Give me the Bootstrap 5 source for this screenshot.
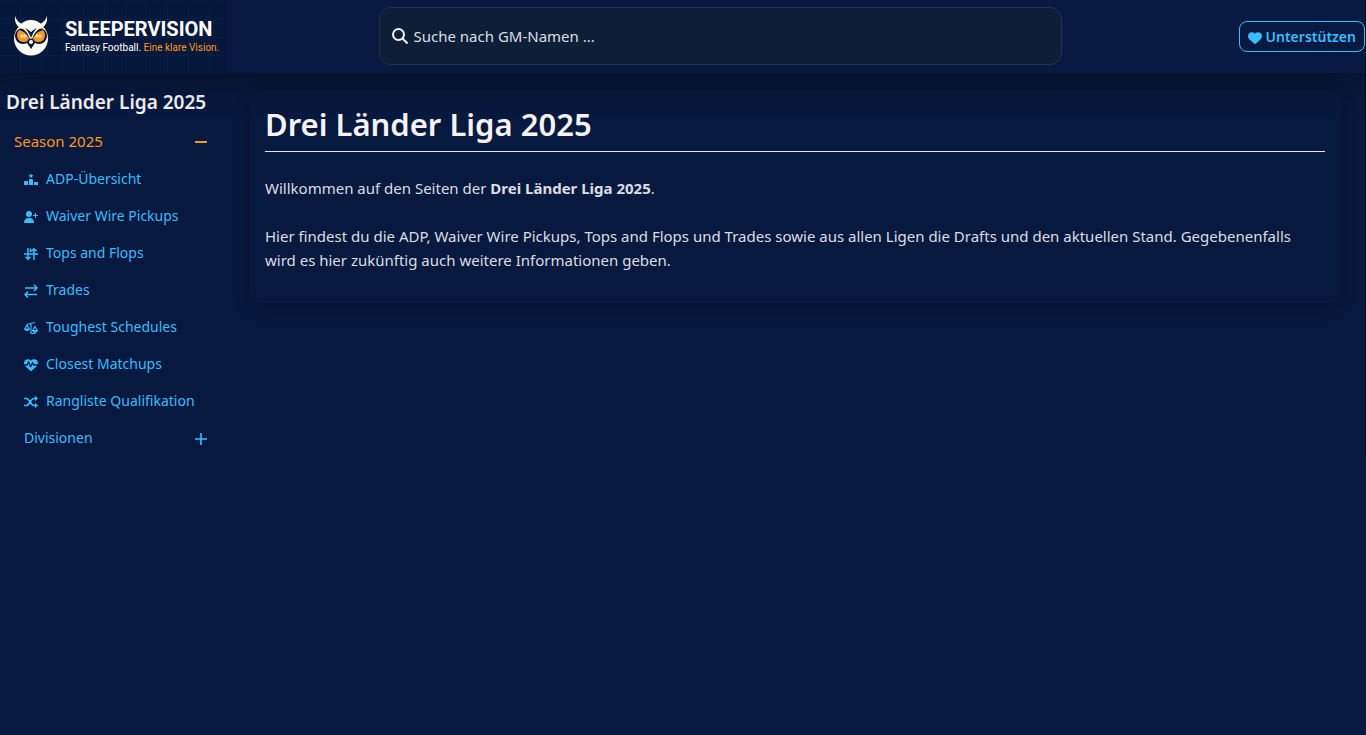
<!DOCTYPE html>
<html lang="de">
<head>
<meta charset="utf-8">
<meta name="viewport" content="width=device-width, initial-scale=1">
<title>Drei Länder Liga 2025 – Sleepervision</title>
<link rel="stylesheet" href="https://cdn.jsdelivr.net/npm/bootstrap@5.3.0/dist/css/bootstrap.min.css">
<style>
  :root { --sky: #38bdff; --amber: #ff9719; --navy: #08193f; --side: 225px; }
  body { background: var(--navy); color: #dcdee2; font-family: "Noto Sans", sans-serif; font-size: 15px; line-height: 24px; border-right: 1px solid #020817; }
  .topbar { background: #081a41; height: 73px; box-shadow: 0 8px 32px rgba(0,0,0,.4); position: relative; z-index: 1; }
  .brand { width: var(--side); color: #fffdf5; padding-left: 11px; gap: 14px; border-right: 1px solid #061433;
    background: repeating-linear-gradient(90deg, transparent 0 20px, #0a1d45 20px 21px), repeating-linear-gradient(0deg, transparent 0 17px, #0a1c44 17px 18px), #07183d; }
  .brand:hover { color: #fff; }
  .brand-name { font: 700 20px/22px Roboto, sans-serif; }
  .brand-claim { font: 400 10px/16px Roboto, sans-serif; }
  .amber { color: var(--amber); }
  .finder { width: 50vw; height: 58px; background: #0d1f36; border: 1px solid #22314c; border-radius: 12px; padding: 0 12px; gap: 6px; }
  .finder input { background: none; border: 0; outline: 0; color: #dcdee2; padding: 0; }
  .finder input::placeholder { color: #dcdee2; opacity: 1; }
  .topbar form, .support { padding-bottom: 1px; }
  .support { width: 150px; }
  .btn-support { --bs-btn-color: var(--sky); --bs-btn-border-color: var(--sky); --bs-btn-hover-color: var(--navy); --bs-btn-hover-bg: var(--sky);
    --bs-btn-padding-x: 8px; --bs-btn-padding-y: 4px; --bs-btn-font-size: 14px; --bs-btn-line-height: 21px; --bs-btn-font-weight: 600; --bs-btn-border-radius: 8px; }
  .side { width: var(--side); padding-top: 17px; }
  .side h2 { font-size: 19px; line-height: 24px; font-weight: 600; color: #f4f4f4; padding-left: 6px; margin-bottom: 9px; }
  .side .row-link { font-size: 14px; line-height: 21px; padding: 8px 17px 8px 24px; color: var(--sky); gap: 8px; background: none; border: 0; }
  .side .row-link.season { font-size: 15px; padding-left: 14px; color: var(--amber); }
  .row-link svg { flex: none; margin-top: 3px; }
  .panel { margin: 17px 24px 0; padding: 15px 16px 7px; border-radius: 12px; box-shadow: 0 4px 16px rgba(0,0,0,.22); }
  .panel h1 { font-size: 31px; line-height: 38px; font-weight: 600; color: #f4f4f4; padding-bottom: 8px; margin-bottom: 24px; border-bottom: 1px solid #e3e6ee; }
  .panel p { margin-bottom: 24px; }
</style>
</head>
<body>
<header class="topbar d-flex align-items-center">
  <a href="#" class="brand d-flex align-items-center h-100 text-decoration-none" aria-label="Sleepervision">
    <svg width="40" height="42" viewBox="0 0 40 42" aria-hidden="true">
      <ellipse cx="20" cy="22.500" rx="17" ry="17" fill="#fffdf2"/>
      <path fill="#07183d" d="M0 0h3l8 9 9 7 9-7 8-9h3v12l-5-1q-7 0-11 4l-4 6-4-6q-4-4-11-4l-5 1z"/>
      <path fill="#fffdf2" d="M10 8q4-4 10-4t10 4q-6 2-10 8-4-6-10-8z"/>
      <path fill="#fffdf2" d="M4 0q2 6 7 8 6 3 9 12 3-9 9-12 5-2 7-8 1 8-5 12-6 2-11 12Q15 14 9 12 3 8 4 0z"/>
      <circle cx="12" cy="20" r="8" fill="#07183d"/><circle cx="28" cy="20" r="8" fill="#07183d"/>
      <path fill="#fffdf2" d="M9 9q7 2 11 13 4-11 11-13 2 3-3 4-5 3-8 13-3-10-8-13-5-1-3-4z"/>
      <path fill="#ff941c" d="M8 14q6 1 10 8-1 4-5 4-6 0-7-6 0-4 2-6zM32 14q-6 1-10 8 1 4 5 4 6 0 7-6 0-4-2-6z"/>
      <path stroke="#fff3d8" d="M9 20h7M11 18v4M14 18v4M24 20h7M26 18v4M29 18v4"/>
      <path fill="#07183d" d="m20 22 4 5-4 6-4-6z"/><circle cx="20" cy="26" r="2" fill="#fffdf2"/>
    </svg>
    <span class="d-flex flex-column">
      <span class="brand-name">SLEEPERVISION</span>
      <span class="brand-claim">Fantasy Football. <span class="amber">Eine klare Vision.</span></span>
    </span>
  </a>
  <form class="flex-fill d-flex justify-content-center" role="search">
    <label class="finder d-flex align-items-center">
      <svg width="16" height="16" viewBox="0 0 16 16" fill="none" stroke="#f0f0f0" stroke-width="2" aria-hidden="true"><circle cx="6.5" cy="6.5" r="5.5"/><path d="m10.5 10.5 5 5"/></svg>
      <input type="search" class="flex-fill" placeholder="Suche nach GM-Namen ..." aria-label="Suche nach GM-Namen">
    </label>
  </form>
  <div class="support d-flex justify-content-end">
    <button type="button" class="btn btn-support text-nowrap"><svg width="14" height="14" viewBox="0 0 512 512" fill="currentColor" aria-hidden="true"><path d="m48 300 180 169c16 14 40 14 56 0l180-169c31-28 48-68 48-109v-6c0-70-50-130-119-141-46-8-92 7-125 40l-12 12-12-12C211 51 165 36 119 44 50 55 0 115 0 185v6c0 41 17 81 48 109z"/></svg> Unterstützen</button>
  </div>
</header>
<div class="d-flex">
  <aside class="side flex-shrink-0">
    <h2>Drei Länder Liga 2025</h2>
    <nav class="d-flex flex-column" aria-label="Liga">
      <button type="button" class="row-link season d-flex justify-content-between align-items-center">Season 2025
        <svg width="14" height="14" viewBox="0 0 14 14" stroke="currentColor" stroke-width="2"><path d="M1 6h12"/></svg></button>
      <a href="#" class="row-link d-flex align-items-center text-decoration-none"><svg width="14" height="14" viewBox="0 0 14 14" fill="currentColor"><path d="m7 .5.8 1.400 1.500.3-1 1.100.1 1.500L7 4.200l-1.400.6.1-1.500-1-1.100 1.500-.3zM5 7q0-1 1-1h2q1 0 1 1v5H5zM0 9q0-1 1-1h3v4H0zM10 9h3q1 0 1 1v2h-4z"/></svg>ADP-Übersicht</a>
      <a href="#" class="row-link d-flex align-items-center text-decoration-none"><svg width="14" height="14" viewBox="0 0 14 14" fill="currentColor"><circle cx="5" cy="4" r="3"/><path d="M0 13q0-5 5-5t5 5zM11 3h1v2h2v1h-2v2h-1V6H9V5h2z"/></svg>Waiver Wire Pickups</a>
      <a href="#" class="row-link d-flex align-items-center text-decoration-none"><svg width="14" height="14" viewBox="0 0 14 14" fill="none" stroke="currentColor" stroke-width="1.500"><path d="M0 7h14M4 1v11M1.500 9.800 4 12.300l2.500-2.500M10 13V2M7.500 4.200 10 1.700l2.500 2.500M6.500 1.500V5"/></svg>Tops and Flops</a>
      <a href="#" class="row-link d-flex align-items-center text-decoration-none"><svg width="14" height="14" viewBox="0 0 14 14" fill="none" stroke="currentColor" stroke-width="1.500"><path d="M1 4h12M10 .8 13 4l-3 3M13 10.500H1M4 7.500l-3 3 3 3"/></svg>Trades</a>
      <a href="#" class="row-link d-flex align-items-center text-decoration-none"><svg width="14" height="14" viewBox="0 0 14 14" fill="none" stroke="currentColor" stroke-width="1.200"><path d="M2.500 3.500 11 1.500M7 2v10.500h4.500M.8 8 3 4l2.200 4M8.800 9.500 11 5.500l2.200 4"/><path fill="currentColor" d="M.7 8h4.600q-.3 1.500-2.300 1.500T.7 8zM8.700 9.700h4.600q-.3 1.500-2.300 1.500t-2.300-1.500z"/></svg>Toughest Schedules</a>
      <a href="#" class="row-link d-flex align-items-center text-decoration-none"><svg width="14" height="14" viewBox="0 0 512 512" fill="currentColor"><path d="M0 185C0 115 50 55 119 44c46-8 92 7 125 40l12 12 12-12c33-33 79-48 125-40 69 11 119 71 119 141 0 18-3 32-8 47H369l-35-70c-9-18-34-18-43 0l-49 99-54-129c-8-20-36-20-44 0l-42 100H8c-5-15-8-29-8-47zm33 95h85c10 0 19-6 22-15l26-62 52 126c8 19 34 20 43 1l51-103 18 37c4 9 13 16 23 16h126c-4 7-9 14-15 20L284 469c-16 14-40 14-56 0L48 300z"/></svg>Closest Matchups</a>
      <a href="#" class="row-link d-flex align-items-center text-decoration-none"><svg width="14" height="14" viewBox="0 0 14 14" fill="none" stroke="currentColor" stroke-width="1.700"><path d="M0 3.500h2.500c3 0 4 7 7.500 7h2M0 10.500h2.500C5.500 10.500 6.500 3.500 10 3.500h2"/><path fill="currentColor" stroke="none" d="M11 .800 14 3.500 11 6.200zM11 7.800l3 2.700-3 2.700z"/></svg>Rangliste Qualifikation</a>
      <button type="button" class="row-link d-flex justify-content-between align-items-center">Divisionen
        <svg width="14" height="14" viewBox="0 0 14 14" stroke="currentColor" stroke-width="1.600"><path d="M1 7h12M7 1v12"/></svg></button>
    </nav>
  </aside>
  <main class="flex-fill">
    <section class="panel">
      <h1>Drei Länder Liga 2025</h1>
      <p>Willkommen auf den Seiten der <strong>Drei Länder Liga 2025</strong>.</p>
      <p>Hier findest du die ADP, Waiver Wire Pickups, Tops and Flops und Trades sowie aus allen Ligen die Drafts und den aktuellen Stand. Gegebenenfalls wird es hier zukünftig auch weitere Informationen geben.</p>
    </section>
  </main>
</div>
<script src="https://cdn.jsdelivr.net/npm/bootstrap@5.3.0/dist/js/bootstrap.bundle.min.js"></script>
</body>
</html>
